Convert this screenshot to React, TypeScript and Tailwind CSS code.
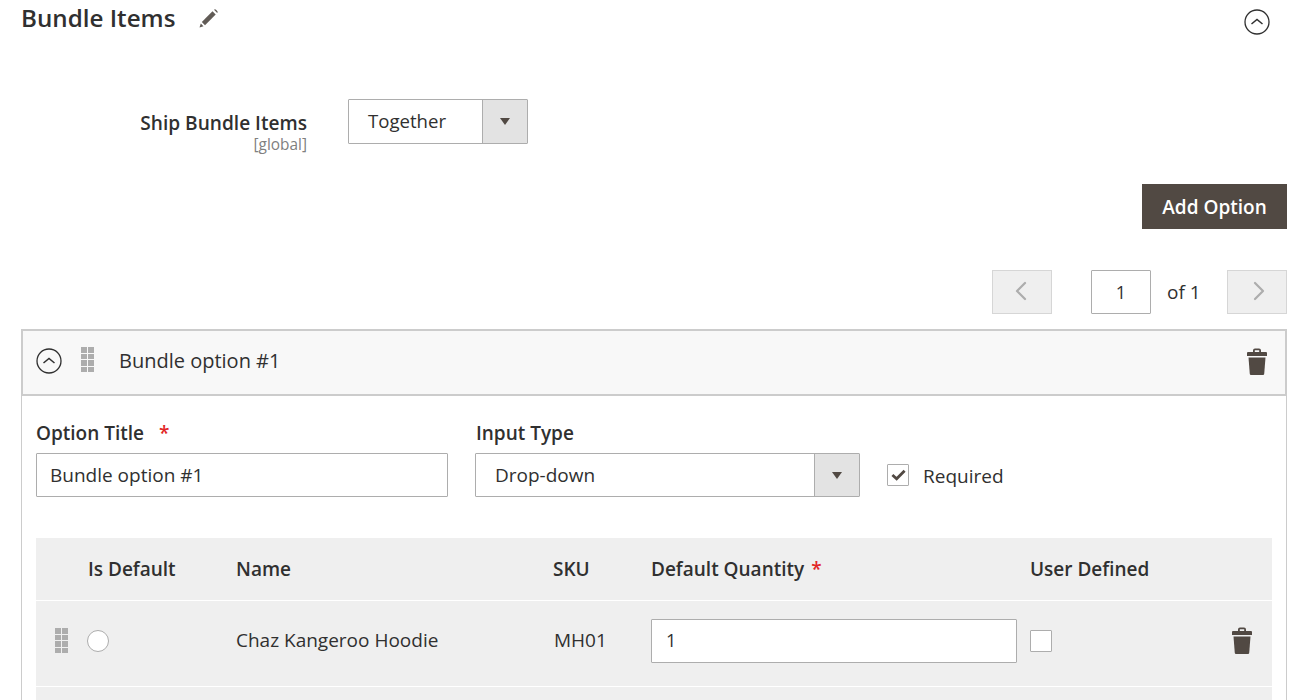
import { ChevronLeft, ChevronRight } from 'lucide-react';

const font = { fontFamily: '"Open Sans", "Noto Sans", sans-serif' };

function CollapseIcon() {
  return (
    <svg viewBox="0 0 26 26" className="w-[26px] h-[26px] text-[#303030]" fill="none" stroke="currentColor">
      <circle cx="13" cy="13" r="12" strokeWidth="1.3" />
      <path d="M7.5 15 L13 10.5 L18.5 15" strokeWidth="1.5" />
    </svg>
  );
}

function Trash({ className = '' }: { className?: string }) {
  return (
    <svg viewBox="0 0 20 27" className={`w-[20px] h-[27px] text-[#514943] ${className}`} fill="currentColor">
      <path fillRule="evenodd" d="M6 2.5 Q6 0.5 8 0.5 H12 Q14 0.5 14 2.5 V4 H19 Q20 4 20 5 V8 H0 V5 Q0 4 1 4 H6 Z M7.8 2.2 V4 H12.2 V2.2 Z" />
      <path d="M1.5 9.5 H18.5 L17.2 26 Q17.1 27 16 27 H4 Q2.9 27 2.8 26 Z" />
    </svg>
  );
}

function DragHandle({ className = '' }: { className?: string }) {
  return (
    <div className={`grid grid-cols-2 gap-[1px] w-[13px] ${className}`}>
      {Array.from({ length: 8 }).map((_, i) => (
        <span key={i} className="h-[5.5px] bg-[#adadad]" />
      ))}
    </div>
  );
}

function Select({ value, className, pad }: { value: string; className: string; pad: string }) {
  return (
    <div className={`flex border border-[#adadad] rounded-[1px] bg-white ${className}`}>
      <div className={`flex-1 flex items-center text-[#303030] ${pad}`}>{value}</div>
      <div className="w-[45px] flex items-center justify-center bg-[#e3e3e3] border-l border-[#adadad]">
        <span className="w-0 h-0 border-x-[5px] border-x-transparent border-t-[7px] border-t-[#514943]" />
      </div>
    </div>
  );
}

export default function App() {
  return (
    <div style={font} className="h-[700px] overflow-hidden bg-white pl-[21px] pr-[23px] text-[#303030]">
      {/* Section title */}
      <div className="flex items-center justify-between h-[40px] pr-[17px]">
        <div className="flex items-center gap-[24px] -mt-[3px]">
          <h2 className="text-[24.2px] font-semibold text-[#303030]">Bundle Items</h2>
          <svg viewBox="0 0 20 20" className="w-[20px] h-[20px] text-[#615b56]" fill="currentColor">
            <path d="M0.5 19.5 L1.8 15.5 L4.5 18.2 Z" />
            <path d="M2.8 14 L13.5 3.3 L16.7 6.5 L6 17.2 Z" />
            <path d="M15 1.8 Q16 0.8 17 1.8 L18.2 3 Q19.2 4 18.2 5 Z" />
          </svg>
        </div>
        <div className="mt-[4px]">
          <CollapseIcon />
        </div>
      </div>

      {/* Ship bundle items */}
      <div className="flex items-start mt-[59px]">
        <div className="w-[286px] text-right pt-[11px]">
          <div className="text-[19.1px] font-semibold leading-[27px]">Ship Bundle Items</div>
          <div className="text-[15.4px] text-[#808080] leading-[16px]">[global]</div>
        </div>
        <Select value="Together" className="w-[180px] h-[45px] ml-[41px]" pad="pl-[19px] -mt-[1px] text-[18.6px]" />
      </div>

      {/* Add option */}
      <div className="flex justify-end mt-[31px]">
        <button className="w-[145px] h-[45px] pt-[2px] bg-[#514943] text-white text-[19px] font-semibold">Add Option</button>
      </div>

      {/* Pager */}
      <div className="flex items-center justify-end mt-[41px] h-[44px]">
        <div className="w-[60px] h-[44px] flex items-center justify-center bg-[#efefef] border border-[#d6d6d6]">
          <ChevronLeft className="w-[32px] h-[32px] text-[#adadad] -mt-[2px] -ml-[2px]" strokeWidth={1.7} />
        </div>
        <div className="w-[60px] h-[44px] ml-[39px] flex items-center justify-center border border-[#adadad] rounded-[1px] text-[18px]">1</div>
        <div className="w-[76px] pl-[16px] text-[19px]">of 1</div>
        <div className="w-[60px] h-[44px] flex items-center justify-center bg-[#efefef] border border-[#d6d6d6]">
          <ChevronRight className="w-[32px] h-[32px] text-[#adadad] -mt-[2px] ml-[4px]" strokeWidth={1.7} />
        </div>
      </div>

      {/* Bundle option */}
      <div className="mt-[15px] border-x border-[#cccccc] h-[400px]">
        <div className="-mx-px flex items-center h-[67px] pb-[3px] bg-[#f8f8f8] border-2 border-[#cccccc]">
          <div className="ml-[13px]">
            <CollapseIcon />
          </div>
          <DragHandle className="ml-[19px] -mt-[3px]" />
          <div className="ml-[25px] text-[20px]">Bundle option #1</div>
          <Trash className="ml-auto mr-[18px]" />
        </div>

        <div className="px-[14px]">
          <div className="flex items-end mt-[24px]">
            <div className="w-[412px]">
              <div className="text-[19px] font-semibold leading-[27px] mb-[6px]">
                Option Title <span className="text-[#e22626] ml-[10px]">*</span>
              </div>
              <div className="h-[44px] border border-[#adadad] rounded-[1px] flex items-center pl-[13px] text-[19px]">Bundle option #1</div>
            </div>
            <div className="ml-[27px] w-[385px]">
              <div className="text-[19px] font-semibold leading-[27px] mb-[6px] pl-px">Input Type</div>
              <Select value="Drop-down" className="w-full h-[44px]" pad="pl-[19px] text-[19px]" />
            </div>
            <div className="ml-[27px] flex items-center h-[44px]">
              <div className="w-[22px] h-[22px] border border-[#adadad] rounded-[1px] flex items-center justify-center">
                <svg viewBox="0 0 16 12" className="w-[15px] h-[12px] text-[#514943]" fill="none" stroke="currentColor" strokeWidth="3">
                  <path d="M1.5 6 L6 10 L14.5 1.5" />
                </svg>
              </div>
              <span className="ml-[14px] mt-[3px] text-[19px]">Required</span>
            </div>
          </div>

          {/* Items table */}
          <div className="mt-[41px] grid grid-cols-[51px_149px_317px_98px_380px_1fr] items-center bg-[#efefef] h-[62px] text-[19px] font-semibold">
            <div />
            <div className="pl-px">Is Default</div>
            <div>Name</div>
            <div>SKU</div>
            <div>
              Default Quantity <span className="text-[#e22626] ml-[2px]">*</span>
            </div>
            <div className="-ml-px">User Defined</div>
          </div>
          <div className="mt-px grid grid-cols-[51px_149px_317px_98px_380px_1fr] items-center bg-[#efefef] h-[85px] pb-[6px] text-[19px]">
            <div className="pl-[19px]">
              <DragHandle />
            </div>
            <div>
              <div className="w-[22px] h-[22px] rounded-full border border-[#adadad] bg-white" />
            </div>
            <div>Chaz Kangeroo Hoodie</div>
            <div className="pl-px">MH01</div>
            <div>
              <div className="w-[366px] h-[44px] bg-white border border-[#adadad] rounded-[1px] flex items-center pl-[14px] text-[18px]">1</div>
            </div>
            <div className="flex items-center justify-between pr-[20px]">
              <div className="w-[22px] h-[22px] -ml-px border border-[#adadad] rounded-[1px] bg-white" />
              <Trash />
            </div>
          </div>
          <div className="mt-px bg-[#efefef] h-[85px]" />
        </div>
      </div>
    </div>
  );
}
